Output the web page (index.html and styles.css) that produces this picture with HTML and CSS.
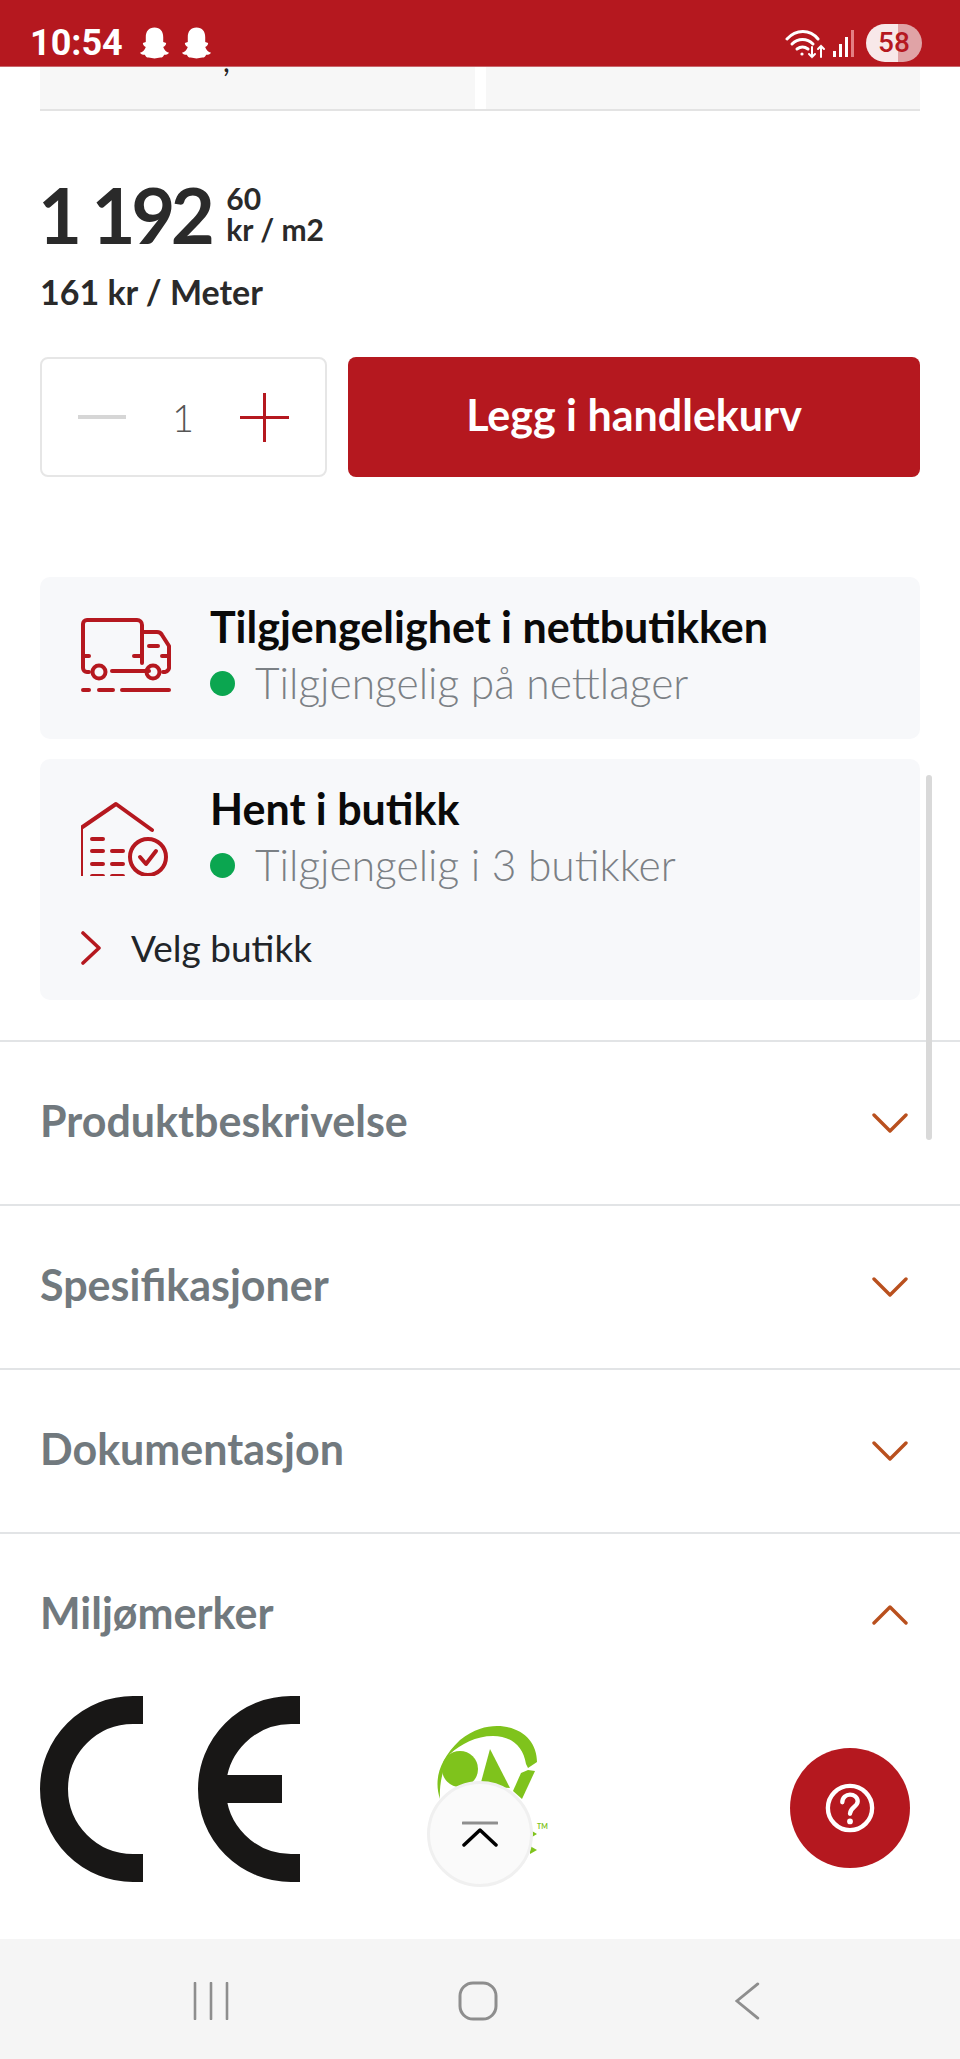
FILE: index.html
```html
<!DOCTYPE html>
<html lang="no">
<head>
  <meta charset="UTF-8">
  <meta name="viewport" content="width=device-width, initial-scale=1.0">
  <title>Legg i handlekurv</title>
  <link rel="stylesheet" href="styles.css">
</head>
<body>

  <div class="status-bar">
    <span class="clock">10:54</span>
    <svg class="ghost" viewBox="0 0 32 32"><path d="M16 0c-6 0-9 4-9 10v5l-3 1c0 2 1 3 3 4-1 3-3 5-6 6 1 2 3 2 5 2 1 2 2 3 4 3 2 0 4 1 6 1s4-1 6-1c2 0 3-1 4-3 2 0 4 0 5-2-3-1-5-3-6-6 2-1 3-2 3-4l-3-1v-5c0-6-3-10-9-10z"/></svg>
    <svg class="ghost" viewBox="0 0 32 32"><path d="M16 0c-6 0-9 4-9 10v5l-3 1c0 2 1 3 3 4-1 3-3 5-6 6 1 2 3 2 5 2 1 2 2 3 4 3 2 0 4 1 6 1s4-1 6-1c2 0 3-1 4-3 2 0 4 0 5-2-3-1-5-3-6-6 2-1 3-2 3-4l-3-1v-5c0-6-3-10-9-10z"/></svg>
    <div class="status-right">
      <svg class="wifi" viewBox="0 0 42 32" fill="none" stroke="#fff" stroke-width="3" stroke-linecap="round">
        <path d="M2 12C11 2 25 2 33 12"/>
        <path d="M7 17c6-6 15-6 21 0"/>
        <path d="M12 22c4-3 7-3 11 0"/>
        <circle cx="17" cy="27" r="1.6" fill="#fff" stroke="none"/>
        <path d="M27 20v10m-3-3l3 3 3-3" stroke-width="2"/>
        <path d="M36 30V19m-3 3l3-3 3 3" stroke-width="2"/>
      </svg>
      <div class="signal">
        <i class="bar-1"></i><i class="bar-2"></i><i class="bar-3"></i><i class="bar-4"></i>
      </div>
      <div class="battery">58</div>
    </div>
  </div>

  <div class="page">
    <div class="top-cards">
      <div class="top-card"><span class="top-card-tail">,</span></div>
      <div class="top-card"></div>
    </div>

    <div class="price">
      <span class="price-main">1 192</span>
      <div class="price-side">
        <span>60</span>
        <span>kr / m2</span>
      </div>
    </div>
    <p class="price-meter">161 kr / Meter</p>

    <div class="buy-row">
      <div class="stepper">
        <span class="minus"></span>
        <span class="qty">1</span>
        <span class="plus"></span>
      </div>
      <a href="#" class="buy-button">Legg i handlekurv</a>
    </div>

    <div class="stock-card">
      <div class="stock-row">
        <svg class="stock-icon" viewBox="0 0 90 76" fill="none" stroke="#b5181f" stroke-width="4" stroke-linecap="round" stroke-linejoin="round">
          <path d="M8 54H6a4 4 0 0 1-4-4V6a4 4 0 0 1 4-4h50a5 5 0 0 1 5 5v38"/>
          <path d="M61 14h15c3 0 4 1 5 3l7 11v20a5 5 0 0 1-4 6h-2"/>
          <path d="M31 53h37"/>
          <path d="M2 38h6M53 38h7M81 38h7M68 28h9"/>
          <circle cx="18" cy="54" r="6.5"/>
          <circle cx="72" cy="54" r="6.5"/>
          <path d="M2 72h6M18 72h14M41 72h47"/>
        </svg>
        <div class="stock-text">
          <h3>Tilgjengelighet i nettbutikken</h3>
          <p class="stock-state"><i class="dot"></i>Tilgjengelig på nettlager</p>
        </div>
      </div>
    </div>

    <div class="stock-card">
      <div class="stock-row">
        <svg class="stock-icon" viewBox="2 -2 90 76" fill="none" stroke="#b5181f" stroke-width="4" stroke-linecap="round" stroke-linejoin="round">
          <path d="M2 74V26L37 2l36 26"/>
          <path d="M13 37h11M13 49h11M13 62h11M13 74h11M33 49h11M33 62h11M33 74h11" stroke-width="4"/>
          <circle cx="69" cy="55" r="18"/>
          <path d="M61 55l6 7 10-13" stroke-width="4"/>
        </svg>
        <div class="stock-text">
          <h3>Hent i butikk</h3>
          <p class="stock-state"><i class="dot"></i>Tilgjengelig i 3 butikker</p>
        </div>
      </div>
      <a href="#" class="store-link">
        <svg class="store-chevron" viewBox="0 0 20 34" fill="none" stroke="#b5181f" stroke-width="3.6" stroke-linecap="round" stroke-linejoin="round"><path d="M2 2l16 15L2 32"/></svg>
        Velg butikk
      </a>
    </div>

    <div class="accordion">
      <div class="acc-row">
        <span>Produktbeskrivelse</span>
        <svg class="acc-chevron" viewBox="0 0 36 20"><path d="M2 2l16 16L34 2"/></svg>
      </div>
      <div class="acc-row">
        <span>Spesifikasjoner</span>
        <svg class="acc-chevron" viewBox="0 0 36 20"><path d="M2 2l16 16L34 2"/></svg>
      </div>
      <div class="acc-row">
        <span>Dokumentasjon</span>
        <svg class="acc-chevron" viewBox="0 0 36 20"><path d="M2 2l16 16L34 2"/></svg>
      </div>
      <div class="acc-row">
        <span>Miljømerker</span>
        <svg class="acc-chevron" viewBox="0 0 36 20"><path d="M2 18L18 2l16 16"/></svg>
      </div>
    </div>

    <div class="badges">
      <svg class="ce-mark" viewBox="0 0 260 186" fill="none" stroke="#181716" stroke-width="28">
        <path d="M103 14H93a79 79 0 0 0 0 158h10"/>
        <path d="M261 14h-10a79 79 0 0 0 0 158h10"/>
        <path d="M172 93h70"/>
      </svg>
      <svg class="eco-mark" viewBox="0 0 112 150" fill="#7fc31c">
        <path d="M4 73C-2 55 2 35 24 14 38 3 50 0 61 0c24 0 40 15 40 36l-9 6-2-4C87 20 75 10 57 10 40 10 25 18 14 28 8 40 3 55 4 73z"/>
        <circle cx="24" cy="43" r="18"/>
        <path d="M54 23l20 39-30-2z"/>
        <path d="M85 47l7-3 7 1-13 28-9-8z"/>
        <path d="M96 105l5 3-5 3zM94 120l7 4-7 4z"/>
        <text x="101" y="103" class="eco-tm">TM</text>
      </svg>
    </div>
  </div>

  <div class="nav-bar">
    <svg class="nav-icon" viewBox="0 0 36 38" fill="none" stroke="#8e8e8e" stroke-width="2.6" stroke-linecap="round"><path d="M2 1v36M18 1v36M34 1v36"/></svg>
    <svg class="nav-icon nav-home" viewBox="0 0 40 40" fill="none" stroke="#8e8e8e" stroke-width="3"><rect x="2" y="2" width="36" height="36" rx="13"/></svg>
    <svg class="nav-icon" viewBox="0 0 26 40" fill="none" stroke="#8e8e8e" stroke-width="3" stroke-linecap="round"><path d="M24 2L2 20l22 18"/></svg>
  </div>

  <!-- flytende over innholdet -->
  <div class="scrollbar"></div>
  <div class="to-top">
    <svg viewBox="0 0 36 26" fill="none" stroke-linecap="round" stroke-linejoin="round">
      <path d="M1 2h34" stroke="#8f8f8f" stroke-width="3"/>
      <path d="M2 24L18 9l16 15" stroke="#000" stroke-width="3.5"/>
    </svg>
  </div>
  <div class="help">
    <svg viewBox="0 0 52 52" fill="none">
      <circle cx="26" cy="26" r="23" stroke="#fff" stroke-width="4.5"/>
      <path d="M18 20c0-5 4-8 8-8s8 3 8 7c0 6-8 6-8 13" stroke="#fff" stroke-width="4.5" stroke-linecap="round"/>
      <circle cx="26" cy="40" r="3" fill="#fff"/>
    </svg>
  </div>

</body>
</html>
```

FILE: styles.css
```css
* {
  margin: 0;
  padding: 0;
  box-sizing: border-box;
}

html, body {
  height: 100%;
}

body {
  position: relative;
  display: flex;
  flex-direction: column;
  height: 2059px;
  overflow: hidden;
  background: #fff;
  font-family: "Lato", "Liberation Sans", sans-serif;
  color: #212529;
}

/* Statuslinje */
.status-bar {
  display: flex;
  align-items: center;
  height: 67px;
  padding: 20px 38px 0 30px;
  border-bottom: 1px solid #c9666b;
  background: #b5181f;
  color: #fff;
}

.clock {
  margin-right: 16px;
  font-family: "Roboto", sans-serif;
  font-size: 36px;
  font-weight: 700;
}

.ghost {
  width: 31px;
  height: 32px;
  margin-right: 11px;
  fill: #fff;
}

.status-right {
  display: flex;
  align-items: center;
  margin-left: auto;
}

.wifi {
  width: 42px;
  height: 32px;
}

.signal {
  display: flex;
  align-items: flex-end;
  gap: 3px;
  height: 28px;
  margin: 0 12px 0 6px;
}

.signal i {
  width: 3px;
  background: #fff;
}

.bar-1 { height: 6px; }
.bar-2 { height: 13px; }
.bar-3 { height: 20px; }
.signal .bar-4 { height: 27px; background: #e37f84; }

.battery {
  width: 56px;
  height: 38px;
  border-radius: 19px;
  background: linear-gradient(90deg, #f8e8e9 58%, #e0a3a6 58%);
  color: #b5181f;
  font-family: "Roboto", sans-serif;
  font-size: 28px;
  font-weight: 500;
  line-height: 38px;
  text-align: center;
}

/* Innhold */
.page {
  flex: 1;
  padding: 0 40px;
}

.top-cards {
  display: flex;
  gap: 11px;
  height: 44px;
  border-bottom: 2px solid #e3e3e3;
}

.top-card {
  flex: 1;
  overflow: hidden;
  background: #f7f7f7;
}

.top-card-tail {
  display: block;
  margin-left: 183px;
  margin-top: -22px;
  font-size: 30px;
  line-height: 30px;
  color: #222;
}

.price {
  display: flex;
  align-items: flex-end;
  margin-top: 70px;
  height: 68px;
}

.price-main {
  margin-left: -2px;
  font-size: 76px;
  font-weight: 700;
  line-height: 68px;
  letter-spacing: -4.5px;
  color: #2a2a2a;
}

.price-side {
  display: flex;
  flex-direction: column;
  margin: 0 0 4px 16px;
  font-size: 30px;
  font-weight: 700;
  line-height: 31px;
  color: #2a2a2a;
}

.price-meter {
  margin-top: 22px;
  font-size: 34px;
  font-weight: 700;
  line-height: 42px;
  color: #2a2a2a;
}

.buy-row {
  display: flex;
  gap: 21px;
  margin-top: 44px;
}

.stepper {
  display: flex;
  align-items: center;
  justify-content: space-between;
  width: 287px;
  height: 120px;
  padding: 0 36px;
  border: 2px solid #e6e6e6;
  border-radius: 8px;
}

.minus {
  width: 48px;
  height: 4px;
  background: #d6d6d6;
}

.qty {
  font-size: 38px;
  font-weight: 300;
  color: #555;
}

.plus {
  width: 49px;
  height: 49px;
  background:
    linear-gradient(#b5181f, #b5181f) center / 100% 3px no-repeat,
    linear-gradient(#b5181f, #b5181f) center / 3px 100% no-repeat;
}

.buy-button {
  flex: 1;
  border-radius: 8px;
  background: #b5181f;
  color: #fff;
  font-size: 43px;
  font-weight: 700;
  line-height: 116px;
  text-align: center;
  text-decoration: none;
}

.stock-card {
  margin-top: 20px;
  padding: 25px 0 0 41px;
  border-radius: 10px;
  background: #f7f8fa;
  min-height: 162px;
}

.buy-row + .stock-card {
  margin-top: 100px;
}

.stock-row {
  display: flex;
  align-items: flex-start;
}

.stock-icon {
  width: 90px;
  height: 76px;
  margin-top: 16px;
  flex: none;
}

.stock-text {
  margin-left: 39px;
}

.stock-text h3 {
  font-size: 43px;
  font-weight: 700;
  line-height: 50px;
  color: #0a0a0a;
}

.stock-state {
  display: flex;
  align-items: center;
  margin-top: 6px;
  font-size: 42.5px;
  font-weight: 300;
  line-height: 50px;
  color: #7b8085;
}

.dot {
  width: 25px;
  height: 25px;
  margin-right: 20px;
  border-radius: 50%;
  background: #0ba650;
}

.store-link {
  display: flex;
  align-items: center;
  margin-top: 36px;
  padding-bottom: 30px;
  font-size: 37px;
  line-height: 44px;
  color: #212529;
  text-decoration: none;
}

.store-chevron {
  width: 20px;
  height: 34px;
  margin-right: 30px;
}

/* Trekkspill */
.accordion {
  margin: 40px -40px 0;
}

.acc-row {
  display: flex;
  align-items: center;
  justify-content: space-between;
  height: 164px;
  padding: 0 52px 0 40px;
  border-top: 2px solid #e2e4e6;
  font-size: 43px;
  font-weight: 700;
  color: #71797e;
}

.acc-row span {
  padding-bottom: 6px;
}

.acc-chevron {
  width: 36px;
  height: 20px;
  fill: none;
  stroke: #b9501e;
  stroke-width: 3.4;
  stroke-linecap: round;
  stroke-linejoin: round;
}

.badges {
  display: flex;
  align-items: flex-start;
}

.ce-mark {
  width: 260px;
  height: 186px;
}

.eco-mark {
  width: 112px;
  height: 150px;
  margin: 30px 0 0 136px;
}

.eco-tm {
  font-size: 7px;
  font-weight: 700;
}

/* Navigasjon nederst */
.nav-bar {
  display: flex;
  align-items: center;
  justify-content: space-between;
  height: 120px;
  padding: 4px 200px 0 193px;
  background: #f5f5f5;
}

.nav-icon {
  height: 38px;
  width: auto;
}

.nav-home {
  height: 40px;
  margin-right: 8px;
}

/* Flytende elementer */
.scrollbar {
  position: absolute;
  left: 926px;
  top: 775px;
  width: 6px;
  height: 365px;
  border-radius: 3px;
  background: #d9d9d9;
}

.to-top {
  position: absolute;
  left: 427px;
  top: 1781px;
  display: flex;
  align-items: center;
  justify-content: center;
  width: 106px;
  height: 106px;
  border: 3px solid #f0f0f0;
  border-radius: 50%;
  background: #fafafa;
}

.to-top svg {
  width: 36px;
  height: 26px;
}

.help {
  position: absolute;
  left: 790px;
  top: 1748px;
  display: flex;
  align-items: center;
  justify-content: center;
  width: 120px;
  height: 120px;
  border-radius: 50%;
  background: #b5181f;
}

.help svg {
  width: 50px;
  height: 50px;
}
```
